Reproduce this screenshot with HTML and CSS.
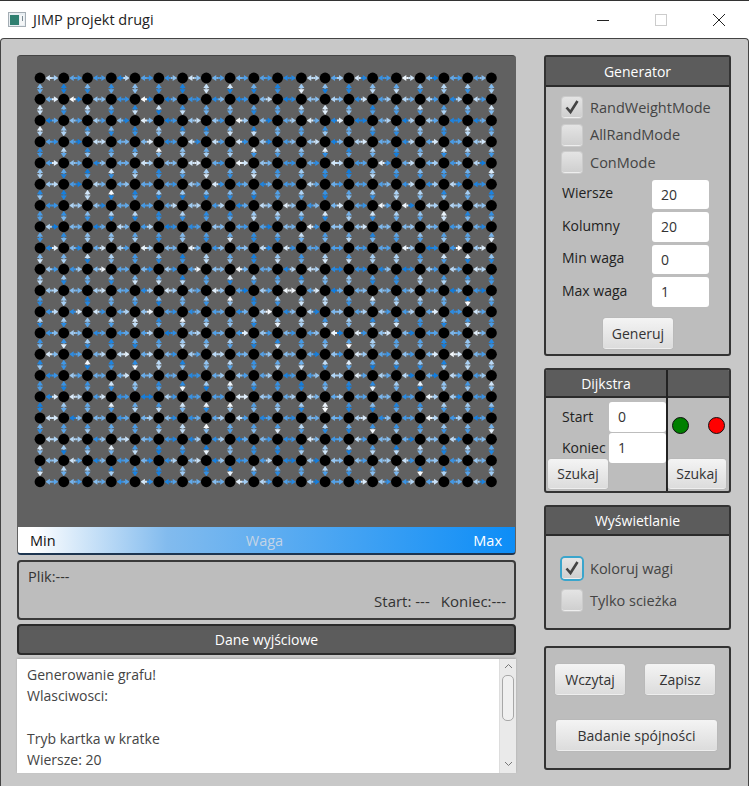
FILE: index.html
```html
<!DOCTYPE html>
<html lang="pl">
<head>
  <meta charset="UTF-8">
  <title>JIMP projekt drugi</title>
  <link rel="stylesheet" href="styles.css">
</head>
<body>
  <div class="titlebar">
    <svg class="app-icon" width="18" height="15" viewBox="0 0 18 15">
      <rect x="0.5" y="0.5" width="17" height="14" fill="#e8eef2" stroke="#a4adb4"/>
      <rect x="2" y="3" width="9" height="10" fill="#2f7f70"/>
      <rect x="12" y="3" width="4" height="10" fill="#f4f6f7"/>
      <rect x="14" y="4" width="1" height="5" fill="#7a8a94"/>
    </svg>
    <span class="title">JIMP projekt drugi</span>
    <div class="win-buttons">
      <svg width="14" height="14" viewBox="0 0 14 14"><path d="M1 7.5H13" stroke="#222" fill="none"/></svg>
      <svg width="14" height="14" viewBox="0 0 14 14"><rect x="1.5" y="1.5" width="11" height="11" stroke="#ccc" fill="none"/></svg>
      <svg width="14" height="14" viewBox="0 0 14 14"><path d="M1 1L13 13M13 1L1 13" stroke="#222" fill="none"/></svg>
    </div>
  </div>

  <div class="window">
    <div class="left">
      <div class="graph-panel">
        <canvas id="graph" width="499" height="472"></canvas>
      </div>
      <div class="legend">
        <span>Min</span>
        <span class="legend-mid">Waga</span>
        <span class="legend-max">Max</span>
      </div>
      <div class="info">
        <div>Plik:---</div>
        <div class="info-right"><span>Start: ---</span><span>Koniec:---</span></div>
      </div>
      <div class="header output-header">Dane wyjściowe</div>
      <div class="output">
        <div class="output-text">
          Generowanie grafu!<br>
          Wlasciwosci:<br>
          <br>
          Tryb kartka w kratke<br>
          Wiersze: 20
        </div>
        <div class="scrollbar">
          <svg width="9" height="6" viewBox="0 0 9 6"><path d="M1 5L4.5 1.5L8 5" stroke="#777" fill="none"/></svg>
          <div class="thumb"></div>
          <svg width="9" height="6" viewBox="0 0 9 6"><path d="M1 1L4.5 4.5L8 1" stroke="#777" fill="none"/></svg>
        </div>
      </div>
    </div>

    <div class="right">
      <div class="panel generator">
        <div class="header">Generator</div>
        <div class="generator-body">
          <label class="check">
            <span class="box"><svg width="16" height="16" viewBox="0 0 16 16"><path d="M2.5 8.5L6.5 13L13.5 2" stroke="#444" stroke-width="2.6" fill="none"/></svg></span>
            RandWeightMode
          </label>
          <label class="check"><span class="box"></span>AllRandMode</label>
          <label class="check"><span class="box"></span>ConMode</label>
          <div class="fields">
            <div class="field"><span>Wiersze</span><input type="text" value="20"></div>
            <div class="field"><span>Kolumny</span><input type="text" value="20"></div>
            <div class="field"><span>Min waga</span><input type="text" value="0"></div>
            <div class="field"><span>Max waga</span><input type="text" value="1"></div>
          </div>
          <button class="btn generate">Generuj</button>
        </div>
      </div>

      <div class="panel dijkstra">
        <div class="dijkstra-left">
          <div class="header">Dijkstra</div>
          <div class="dijkstra-fields">
            <div class="dfield"><span>Start</span><input type="text" value="0"></div>
            <div class="dfield"><span>Koniec</span><input type="text" value="1"></div>
            <button class="btn search">Szukaj</button>
          </div>
        </div>
        <div class="dijkstra-right">
          <div class="header"></div>
          <div class="lights">
            <span class="light green"></span>
            <span class="light red"></span>
          </div>
          <button class="btn search">Szukaj</button>
        </div>
      </div>

      <div class="panel display">
        <div class="header">Wyświetlanie</div>
        <div class="display-body">
          <label class="check">
            <span class="box focused"><svg width="16" height="16" viewBox="0 0 16 16"><path d="M2.5 8.5L6.5 13L13.5 2" stroke="#444" stroke-width="2.6" fill="none"/></svg></span>
            Koloruj wagi
          </label>
          <label class="check"><span class="box"></span>Tylko scieżka</label>
        </div>
      </div>

      <div class="panel actions">
        <div class="actions-row">
          <button class="btn load">Wczytaj</button>
          <button class="btn save">Zapisz</button>
        </div>
        <button class="btn connect">Badanie spójności</button>
      </div>
    </div>
  </div>

  <script src="graph.js"></script>
</body>
</html>
```

FILE: styles.css
```css
* {
  box-sizing: border-box;
}
html, body {
  margin: 0;
  height: 786px;
  overflow: hidden;
}
body {
  font-family: "Open Sans", "Noto Sans", Arial, sans-serif;
  font-size: 14px;
  color: #333;
  background: white;
  border-top: 1px solid #333;
}

/* title bar */
.titlebar {
  height: 37px;
  display: flex;
  align-items: center;
  padding-left: 8px;
  background: white;
}
.app-icon {
  margin-right: 7px;
}
.title {
  font-size: 14.5px;
  color: #222;
}
.win-buttons {
  margin-left: auto;
  display: flex;
  gap: 44px;
  padding-right: 23px;
}

/* main window */
.window {
  height: 748px;
  display: flex;
  padding: 16px 15px 0 16px;
  background: #c8c8c8;
  border: 1px solid #444;
  border-bottom: none;
  border-radius: 4px 4px 0 0;
}
.left {
  width: 499px;
  display: flex;
  flex-direction: column;
}
.right {
  width: 187px;
  margin-left: 28px;
  display: flex;
  flex-direction: column;
}

.header {
  height: 30px;
  display: flex;
  align-items: center;
  justify-content: center;
  flex-shrink: 0;
  background: #5c5c5c;
  color: white;
  border-bottom: 2px solid #2b2b2b;
}

/* graph */
.graph-panel {
  height: 472px;
  background: #616161;
  border-radius: 4px 4px 0 0;
  border-top: 1px solid #444;
  overflow: hidden;
}
#graph {
  display: block;
  margin-top: -1px;
}
.legend {
  height: 28px;
  display: flex;
  align-items: center;
  justify-content: space-between;
  padding: 0 13px 0 12px;
  font-size: 14.5px;
  background: linear-gradient(to right, white 3%, #82bbee 30%, #0c8df7 100%);
  border: 1px solid #616161;
  border-top: none;
  border-bottom: 2px solid #1d3550;
  border-radius: 0 0 4px 4px;
  color: #111;
}
.legend-mid {
  color: #c3d4e6;
}
.legend-max {
  color: white;
}
.info {
  height: 60px;
  margin-top: 5px;
  padding: 4px 8px 0 9px;
  font-size: 14.5px;
  background: #bdbdbd;
  border: 2px solid #3a3a3a;
  border-radius: 4px;
  line-height: 22px;
}
.info-right {
  display: flex;
  justify-content: flex-end;
  gap: 11px;
  margin-top: 2px;
  font-size: 15px;
}
.output-header {
  height: 31px;
  margin-top: 4px;
  border: 2px solid #2b2b2b;
  border-radius: 4px;
}
.output {
  height: 114px;
  margin-top: 4px;
  display: flex;
  background: white;
  box-shadow: 0 -1px 2px rgba(0,0,0,0.15);
}
.output-text {
  flex: 1;
  padding: 5px 10px;
  line-height: 21.3px;
  color: #444;
}
.scrollbar {
  width: 17px;
  display: flex;
  flex-direction: column;
  align-items: center;
  padding-top: 4px;
  background: #eaeaea;
  border-left: 1px solid #ddd;
}
.thumb {
  width: 12px;
  height: 46px;
  margin-top: 6px;
  margin-bottom: 40px;
  background: #f0f0f0;
  border: 1px solid #a8a8a8;
  border-radius: 5px;
}

/* right side panels */
.panel {
  background: #bdbdbd;
  border: 2px solid #333;
  border-radius: 3px;
}
.generator {
  height: 301px;
}
.generator-body {
  display: flex;
  flex-direction: column;
  padding: 10px 0 0 16px;
}
.check {
  display: flex;
  align-items: center;
  height: 21px;
  margin-bottom: 6.5px;
  font-size: 14.5px;
  line-height: 18px;
  color: #444;
}
.box {
  width: 20px;
  height: 21px;
  margin-right: 8px;
  display: flex;
  align-items: center;
  justify-content: center;
  background: linear-gradient(#e4e4e4, #cfcfcf);
  border-bottom: 1px solid #eee;
  border-radius: 3px;
  box-shadow: 0 0 0 1px #cbcbcb;
}
.box.focused {
  box-shadow: 0 0 0 2px #3aa5cc;
}
.field {
  display: flex;
  align-items: center;
  justify-content: space-between;
  height: 29.5px;
  margin-bottom: 3px;
  padding-right: 20px;
  color: #222;
}
.field span {
  margin-top: -3px;
}
input {
  width: 57px;
  height: 29.5px;
  padding: 0 9px;
  border: none;
  border-radius: 3px;
  background: white;
  font-family: inherit;
  font-size: 14px;
  color: #333;
}
.btn {
  height: 31px;
  padding: 0;
  font-family: inherit;
  font-size: 14px;
  color: #333;
  background: linear-gradient(#f4f4f4, #dcdcdc);
  border: none;
  border-bottom: 1px solid #eee;
  border-radius: 3px;
  box-shadow: 0 0 1px #999;
}
.generate {
  width: 70px;
  margin: 8.5px 0 0 41px;
}

.dijkstra {
  height: 125px;
  margin-top: 12px;
  display: flex;
  overflow: hidden;
}
.dijkstra .header {
  height: 28px;
}
.dijkstra-left {
  width: 120px;
}
.dijkstra-right {
  flex: 1;
  border-left: 2px solid #222;
  display: flex;
  flex-direction: column;
}
.dijkstra-fields {
  display: flex;
  flex-direction: column;
  padding-top: 4px;
}
.dfield {
  display: flex;
  align-items: center;
  justify-content: space-between;
  height: 29.5px;
  margin-bottom: 1.5px;
  padding-left: 16px;
  color: #222;
}
.dijkstra-fields .search {
  margin: -5px 0 0 2px;
}
.search {
  width: 60px;
  height: 30px;
}
.dijkstra-right .search {
  width: 58px;
  margin-left: 0;
}
.lights {
  height: 55px;
  display: flex;
  align-items: center;
  justify-content: space-between;
  padding: 0 4px 1px 4px;
  margin-bottom: 6px;
}
.light {
  width: 17px;
  height: 17px;
  border-radius: 50%;
  border: 1px solid #111;
}
.green {
  background: green;
}
.red {
  background: red;
}

.display {
  height: 125px;
  margin-top: 12px;
}
.display .header {
  height: 29px;
}
.display-body {
  padding: 22px 0 0 16px;
}
.display-body .check {
  margin-bottom: 11px;
}

.actions {
  height: 124px;
  margin-top: 16px;
  padding: 16px 0 0 9px;
}
.actions-row {
  display: flex;
  gap: 20px;
  margin-bottom: 25px;
}
.load, .save {
  width: 70px;
}
.connect {
  width: 161px;
  margin-left: 1px;
}
```

FILE: graph.js
```js
// Draws the 20x20 grid graph, each edge holds two arrows coloured by weight
const canvas = document.getElementById('graph');
const ctx = canvas.getContext('2d');

const COLS = 20;
const ROWS = 20;
const STEP_X = 23.76;
const STEP_Y = 21.25;
const LEFT = 23;
const TOP = 23;
const NODE_R = 5.4;

// small seeded generator so the picture stays the same on each load
let seed = 20;
function rand() {
  seed = (seed * 1664525 + 1013904223) % 4294967296;
  return seed / 4294967296;
}

// weights lean to the blue end, as in the real run
function randWeight() {
  return Math.pow(rand(), 0.7);
}

function weightColor(w) {
  const r = Math.round(255 + (16 - 255) * w);
  const g = Math.round(255 + (124 - 255) * w);
  const b = Math.round(255 + (222 - 255) * w);
  return `rgb(${r},${g},${b})`;
}

function drawArrow(x1, y1, x2, y2, w) {
  const dx = x2 - x1;
  const dy = y2 - y1;
  const len = Math.sqrt(dx * dx + dy * dy);
  const ux = dx / len;
  const uy = dy / len;
  const midX = (x1 + x2) / 2;
  const midY = (y1 + y2) / 2;
  const tipX = x2 - ux * NODE_R;
  const tipY = y2 - uy * NODE_R;
  const baseX = tipX - ux * 4.5;
  const baseY = tipY - uy * 4.5;

  ctx.strokeStyle = weightColor(w);
  ctx.lineWidth = 2;
  ctx.beginPath();
  ctx.moveTo(midX, midY);
  ctx.lineTo(baseX, baseY);
  ctx.stroke();

  ctx.fillStyle = weightColor(w);
  ctx.beginPath();
  ctx.moveTo(tipX, tipY);
  ctx.lineTo(baseX - uy * 3, baseY + ux * 3);
  ctx.lineTo(baseX + uy * 3, baseY - ux * 3);
  ctx.closePath();
  ctx.fill();
}

function drawEdge(x1, y1, x2, y2) {
  drawArrow(x1, y1, x2, y2, randWeight());
  drawArrow(x2, y2, x1, y1, randWeight());
}

for (let r = 0; r < ROWS; r++) {
  for (let c = 0; c < COLS; c++) {
    const x = LEFT + c * STEP_X;
    const y = TOP + r * STEP_Y;
    if (c < COLS - 1) drawEdge(x, y, x + STEP_X, y);
    if (r < ROWS - 1) drawEdge(x, y, x, y + STEP_Y);
  }
}

// nodes go on top of the edges
ctx.fillStyle = 'black';
for (let r = 0; r < ROWS; r++) {
  for (let c = 0; c < COLS; c++) {
    ctx.beginPath();
    ctx.arc(LEFT + c * STEP_X, TOP + r * STEP_Y, NODE_R, 0, Math.PI * 2);
    ctx.fill();
  }
}
```
